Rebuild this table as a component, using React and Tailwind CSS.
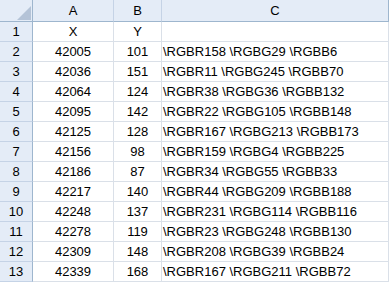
const rows = [
  ['X', 'Y', ''],
  ['42005', '101', '\\RGBR158 \\RGBG29 \\RGBB6'],
  ['42036', '151', '\\RGBR11 \\RGBG245 \\RGBB70'],
  ['42064', '124', '\\RGBR38 \\RGBG36 \\RGBB132'],
  ['42095', '142', '\\RGBR22 \\RGBG105 \\RGBB148'],
  ['42125', '128', '\\RGBR167 \\RGBG213 \\RGBB173'],
  ['42156', '98', '\\RGBR159 \\RGBG4 \\RGBB225'],
  ['42186', '87', '\\RGBR34 \\RGBG55 \\RGBB33'],
  ['42217', '140', '\\RGBR44 \\RGBG209 \\RGBB188'],
  ['42248', '137', '\\RGBR231 \\RGBG114 \\RGBB116'],
  ['42278', '119', '\\RGBR23 \\RGBG248 \\RGBB130'],
  ['42309', '148', '\\RGBR208 \\RGBG39 \\RGBB24'],
  ['42339', '168', '\\RGBR167 \\RGBG211 \\RGBB72'],
];

export default function App() {
  return (
    <div className="w-[389px] h-[282px] overflow-hidden bg-white text-[13px] text-black" style={{ fontFamily: '"Liberation Sans", Arial, sans-serif' }}>
      {/* column headers */}
      <div className="flex h-[22px]">
        <div className="relative w-[33px] shrink-0 bg-[#e4ecf7] border-r border-b border-[#9eb6ce]">
          <svg className="absolute right-[1px] bottom-[1px]" width="14" height="14" viewBox="0 0 14 14">
            <polygon points="14,0 14,14 0,14" fill="#b4c3d7" />
          </svg>
        </div>
        <div className="w-[81px] shrink-0 flex items-center justify-center bg-[#e4ecf7] border-r border-r-[#c5d3e6] border-b border-b-[#9eb6ce]">A</div>
        <div className="w-[48px] shrink-0 flex items-center justify-center bg-[#e4ecf7] border-r border-r-[#c5d3e6] border-b border-b-[#9eb6ce]">B</div>
        <div className="w-[227px] shrink-0 flex items-center justify-center bg-[#e4ecf7] border-r border-r-[#9eb6ce] border-b border-b-[#9eb6ce]">C</div>
      </div>
      {rows.map((r, i) => (
        <div key={i} className="flex h-[20px]">
          <div className="w-[33px] shrink-0 flex items-center justify-center bg-[#e4ecf7] border-r border-r-[#9eb6ce] border-b border-b-[#c5d3e6]">{i + 1}</div>
          <div className="w-[81px] shrink-0 flex items-center justify-center border-r border-b border-[#dae0e8]">{r[0]}</div>
          <div className="w-[48px] shrink-0 flex items-center justify-center border-r border-b border-[#dae0e8]">{r[1]}</div>
          <div className="w-[227px] shrink-0 flex items-center pl-[1px] whitespace-nowrap border-r border-b border-[#dae0e8]">{r[2]}</div>
        </div>
      ))}
    </div>
  );
}
